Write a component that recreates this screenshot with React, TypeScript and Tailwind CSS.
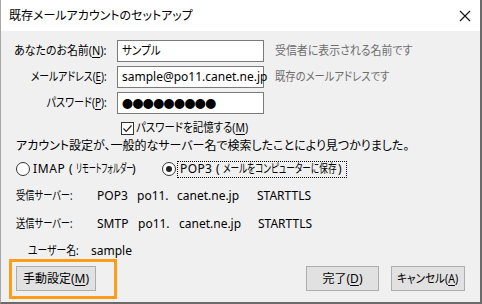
import React from "react";

const font = "font-['Noto_Sans','Noto_Sans_CJK_JP',sans-serif] [font-feature-settings:'palt']";

function S({ c, children }: { c: string; children: React.ReactNode }) {
  return <span className={`inline-block whitespace-nowrap ${c}`}>{children}</span>;
}

function Input({ children }: { children: React.ReactNode }) {
  return (
    <div className="ml-[10px] flex h-[22px] w-[147px] shrink-0 items-center border border-[#7a7a7a] bg-white pl-[4px] text-[12px] text-black">
      {children}
    </div>
  );
}

function Row({ label, value, hint }: { label: React.ReactNode; value: React.ReactNode; hint?: React.ReactNode }) {
  return (
    <div className="flex items-center">
      <div className="flex w-[91px] shrink-0 justify-end whitespace-nowrap">{label}</div>
      <Input>{value}</Input>
      {hint && <div className="ml-[11px] whitespace-nowrap text-[#6d6d6d]">{hint}</div>}
    </div>
  );
}

function U({ children }: { children: React.ReactNode }) {
  return <span className="underline underline-offset-[2px]">{children}</span>;
}

function Button({ children, w }: { children: React.ReactNode; w: string }) {
  return (
    <div className={`flex h-[25px] items-center justify-center whitespace-nowrap border border-[#adadad] bg-[#e1e1e1] ${w}`}>
      {children}
    </div>
  );
}

export default function App() {
  return (
    <div className={`${font} relative h-[304px] w-[482px] overflow-hidden border-b-2 border-l border-r-2 border-b-[#6b6b6b] border-l-[#a8a8a8] border-r-[#6b6b6b] bg-[#f0f0f0] text-[12px] leading-none text-black`}>
      {/* title bar */}
      <div className="flex h-[31px] items-center justify-between bg-white pl-[8px] pr-[9px]">
        <span className="text-[12px]">既存メールアカウントのセットアップ</span>
        <svg width="12" height="12" viewBox="0 0 12 12" className="mt-[1px]">
          <path d="M1 1 L11 11 M11 1 L1 11" stroke="#111" strokeWidth="1.1" />
        </svg>
      </div>

      <div className="whitespace-nowrap pl-[15px]">
        <div className="flex flex-col gap-[4px] pt-[9px]">
          <Row
            label={<S c="origin-right scale-x-[0.91]">あなたのお名前(<U>N</U>):</S>}
            value={<S c="origin-left scale-x-[0.88]">サンプル</S>}
            hint={<S c="origin-left scale-x-[0.91]">受信者に表示される名前です</S>}
          />
          <Row
            label={<S c="origin-right scale-x-[0.82]">メールアドレス(<U>E</U>):</S>}
            value="sample@po11.canet.ne.jp"
            hint={<S c="origin-left scale-x-[0.86]">既存のメールアドレスです</S>}
          />
          <Row
            label={<S c="origin-right scale-x-[0.84]">パスワード(<U>P</U>):</S>}
            value={<span className="font-['Noto_Sans_CJK_JP'] text-[11px] tracking-[-0.6px]">●●●●●●●●●</span>}
          />
        </div>

        {/* remember password */}
        <div className="flex h-[24px] items-center pl-[105px] pt-[4px]">
          <div className="flex h-[13px] w-[13px] shrink-0 items-center justify-center border border-[#333] bg-white">
            <svg width="11" height="11" viewBox="0 0 11 11">
              <path d="M1.5 5.5 L4.2 8.3 L9.5 2.5" fill="none" stroke="#222" strokeWidth="1.2" />
            </svg>
          </div>
          <span className="ml-[2px]">
            <S c="origin-left scale-x-[0.87]">パスワードを記憶する(<U>M</U>)</S>
          </span>
        </div>

        <div className="flex h-[16px] items-center">アカウント設定が、一般的なサーバー名で検索したことにより見つかりました。</div>

        {/* radios */}
        <div className="flex h-[30px] items-center">
          <div className="h-[14px] w-[14px] shrink-0 rounded-full border border-[#333] bg-white" />
          <span className="ml-[3px] flex w-[101px] shrink-0 items-center">
            <span className="w-[43px] shrink-0 tracking-[0.6px]">IMAP (</span>
            <S c="w-[56px] shrink-0 origin-left scale-x-[0.6]">リモートフォルダー</S>
            <span>)</span>
          </span>
          <div className="ml-[28px] flex h-[14px] w-[14px] shrink-0 items-center justify-center rounded-full border border-[#333] bg-white">
            <div className="h-[6px] w-[6px] rounded-full bg-[#222]" />
          </div>
          <span className="ml-[1px] flex h-[17px] w-[170px] shrink-0 items-center border border-dotted border-black pl-[2px]">
            <span className="w-[43px] shrink-0 tracking-[0.4px]">POP3 (</span>
            <S c="w-[115px] shrink-0 origin-left scale-x-[0.72]">メールをコンピューターに保存</S>
            <span>)</span>
          </span>
        </div>

        {/* servers */}
        <div className="flex h-[24px] items-center">
          <span className="w-[81px] shrink-0">
            <S c="origin-left scale-x-[0.77]">受信サーバー:</S>
          </span>
          <span className="w-[40px] shrink-0">POP3</span>
          <span className="w-[40px] shrink-0">po11.</span>
          <span className="w-[80px] shrink-0">canet.ne.jp</span>
          <span>STARTTLS</span>
        </div>
        <div className="flex h-[32px] items-center">
          <span className="w-[81px] shrink-0">
            <S c="origin-left scale-x-[0.77]">送信サーバー:</S>
          </span>
          <span className="w-[41px] shrink-0">SMTP</span>
          <span className="w-[41px] shrink-0">po11.</span>
          <span className="w-[79px] shrink-0">canet.ne.jp</span>
          <span>STARTTLS</span>
        </div>
        <div className="flex h-[22px] items-center pl-[12px]">
          <span className="w-[63px] shrink-0">
            <S c="origin-left scale-x-[0.82]">ユーザー名:</S>
          </span>
          <span>sample</span>
        </div>

        {/* buttons */}
        <div className="mt-[4px] flex items-center">
          <Button w="w-[80px]">
            手動設定(<U>M</U>)
          </Button>
          <div className="flex-1" />
          <Button w="w-[73px]">
            完了(<U>D</U>)
          </Button>
          <div className="w-[12px]" />
          <Button w="w-[74px]">
            <S c="origin-center scale-x-[0.88]">キャンセル(<U>A</U>)</S>
          </Button>
          <div className="w-[15px]" />
        </div>
      </div>

      {/* orange highlight annotation */}
      <div className="absolute left-[8px] top-[259px] h-[40px] w-[108px] border-[3px] border-[#ff9c1a]" />
    </div>
  );
}
